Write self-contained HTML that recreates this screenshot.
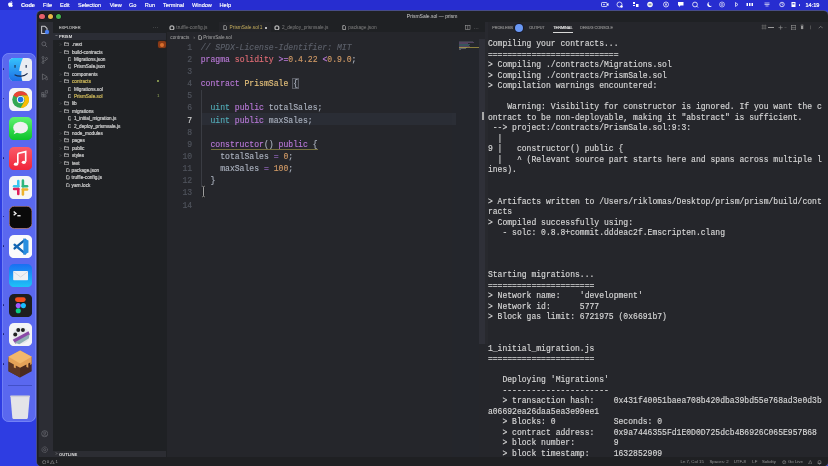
<!DOCTYPE html>
<html><head><meta charset="utf-8"><style>
*{margin:0;padding:0;box-sizing:border-box}
html,body{width:828px;height:466px;overflow:hidden;background:#2e3de2;font-family:"Liberation Sans",sans-serif}
div,span,svg{position:absolute}
.t{white-space:pre;line-height:10px;height:10px}
.m{font-family:"Liberation Mono",monospace}
#root{position:absolute;left:0;top:0;width:828px;height:466px;will-change:transform;overflow:hidden}
</style></head><body><div id="root">
<div style="left:0.00px;top:0.00px;width:828.00px;height:9.60px;background:#272dd0;"></div>
<svg style="left:8.2px;top:1.4px" width="5" height="6" viewBox="0 0 17 20"><path fill="#fff" d="M14.1 10.6c0-2.6 2.1-3.8 2.2-3.9-1.2-1.8-3.1-2-3.7-2-1.6-.2-3.1.9-3.9.9-.8 0-2-.9-3.3-.9C3.7 4.8 2.1 5.8 1.2 7.3c-1.8 3.1-.5 7.8 1.3 10.3.9 1.2 1.9 2.6 3.2 2.6 1.3-.1 1.8-.8 3.3-.8s2 .8 3.3.8c1.4 0 2.3-1.3 3.1-2.5 1-1.4 1.4-2.8 1.4-2.9-.1 0-2.7-1-2.7-4.2zM11.6 3c.7-.9 1.2-2 1-3.2-1 0-2.3.7-3 1.6-.7.8-1.2 2-1.1 3.1 1.2.1 2.3-.6 3.1-1.5z"/></svg>
<div class="t" style="left:21.00px;top:-0.10px;font-size:5.6px;color:#ffffff;font-weight:bold;-webkit-text-stroke:0.15px #ffffff;">Code</div>
<div class="t" style="left:43.00px;top:-0.10px;font-size:5.6px;color:#ffffff;font-weight:normal;-webkit-text-stroke:0.15px #ffffff;">File</div>
<div class="t" style="left:60.00px;top:-0.10px;font-size:5.6px;color:#ffffff;font-weight:normal;-webkit-text-stroke:0.15px #ffffff;">Edit</div>
<div class="t" style="left:78.00px;top:-0.10px;font-size:5.6px;color:#ffffff;font-weight:normal;-webkit-text-stroke:0.15px #ffffff;">Selection</div>
<div class="t" style="left:109.70px;top:-0.10px;font-size:5.6px;color:#ffffff;font-weight:normal;-webkit-text-stroke:0.15px #ffffff;">View</div>
<div class="t" style="left:129.00px;top:-0.10px;font-size:5.6px;color:#ffffff;font-weight:normal;-webkit-text-stroke:0.15px #ffffff;">Go</div>
<div class="t" style="left:144.80px;top:-0.10px;font-size:5.6px;color:#ffffff;font-weight:normal;-webkit-text-stroke:0.15px #ffffff;">Run</div>
<div class="t" style="left:163.00px;top:-0.10px;font-size:5.6px;color:#ffffff;font-weight:normal;-webkit-text-stroke:0.15px #ffffff;">Terminal</div>
<div class="t" style="left:192.00px;top:-0.10px;font-size:5.6px;color:#ffffff;font-weight:normal;-webkit-text-stroke:0.15px #ffffff;">Window</div>
<div class="t" style="left:219.50px;top:-0.10px;font-size:5.6px;color:#ffffff;font-weight:normal;-webkit-text-stroke:0.15px #ffffff;">Help</div>
<div class="t" style="left:805.40px;top:-0.10px;font-size:5.6px;color:#ffffff;font-weight:normal;-webkit-text-stroke:0.2px #ffffff;">14:19</div>
<svg style="left:601.20px;top:1.20px" width="8" height="7" viewBox="0 0 16 14"><rect x="1" y="3" width="11" height="8" rx="1.5" fill="none" stroke="#ffffff" stroke-width="1.5"/><path d="M12 6l3-2v6l-3-2z" fill="#ffffff"/><circle cx="6" cy="7" r="1.5" fill="#ffffff"/></svg>
<svg style="left:616.20px;top:1.20px" width="8" height="7" viewBox="0 0 16 14"><circle cx="7" cy="7" r="5" fill="none" stroke="#ffffff" stroke-width="1.5"/><circle cx="11" cy="11" r="2.5" fill="#ffffff"/></svg>
<svg style="left:631.50px;top:1.20px" width="8" height="7" viewBox="0 0 16 14"><rect x="2" y="2" width="4" height="4" fill="#ffffff"/><rect x="8" y="6" width="5" height="6" fill="#ffffff"/><rect x="2" y="8" width="4" height="2" fill="#ffffff"/></svg>
<svg style="left:646.20px;top:1.20px" width="8" height="7" viewBox="0 0 16 14"><circle cx="8" cy="7" r="5.5" fill="#ffffff"/><rect x="5" y="5" width="6" height="4" fill="#8b95a0"/></svg>
<svg style="left:661.90px;top:1.20px" width="8" height="7" viewBox="0 0 16 14"><circle cx="8" cy="7" r="5" fill="none" stroke="#ffffff" stroke-width="1.5"/><rect x="6" y="5" width="1.3" height="4" fill="#ffffff"/><rect x="8.7" y="5" width="1.3" height="4" fill="#ffffff"/></svg>
<svg style="left:677.00px;top:1.20px" width="8" height="7" viewBox="0 0 16 14"><path d="M2 2h11v7H7l-3 3V9H2z" fill="#ffffff"/></svg>
<svg style="left:690.70px;top:1.20px" width="8" height="7" viewBox="0 0 16 14"><circle cx="8" cy="7" r="4.8" fill="none" stroke="#ffffff" stroke-width="1.6"/><path d="M11 10l3 3" stroke="#ffffff" stroke-width="1.6"/></svg>
<svg style="left:705.20px;top:1.20px" width="8" height="7" viewBox="0 0 16 14"><path d="M9 2a5 5 0 1 0 5 7a4 4 0 0 1-5-7z" fill="#ffffff"/></svg>
<svg style="left:718.40px;top:1.20px" width="8" height="7" viewBox="0 0 16 14"><circle cx="8" cy="7" r="5" fill="none" stroke="#ffffff" stroke-width="1.2"/><circle cx="8" cy="7" r="2" fill="none" stroke="#ffffff" stroke-width="1.2"/></svg>
<svg style="left:733.00px;top:1.20px" width="6" height="7" viewBox="0 0 12 14"><path d="M5 3l5 4-5 4M5 3v8" fill="none" stroke="#ffffff" stroke-width="1.4"/></svg>
<svg style="left:746.40px;top:1.20px" width="8" height="7" viewBox="0 0 16 14"><rect x="1" y="4" width="3" height="6" fill="#ffffff"/><rect x="6" y="4" width="3" height="6" fill="#ffffff"/><rect x="11" y="4" width="3" height="6" fill="#ffffff"/></svg>
<svg style="left:762.70px;top:1.20px" width="8" height="7" viewBox="0 0 16 14"><path d="M3 4h10M3 7h10M5 10h6" stroke="#ffffff" stroke-width="1.3"/></svg>
<svg style="left:777.80px;top:1.20px" width="8" height="7" viewBox="0 0 16 14"><circle cx="8" cy="7" r="4.5" fill="none" stroke="#ffffff" stroke-width="1.5"/><path d="M8 4v3l2 1" stroke="#ffffff" stroke-width="1.2" fill="none"/></svg>
<svg style="left:789.70px;top:1.20px" width="8" height="7" viewBox="0 0 16 14"><rect x="3" y="2" width="8" height="10" fill="#ffffff"/><rect x="5" y="4" width="4" height="3" fill="#5560d0"/></svg>
<div style="left:798.6px;top:4.2px;width:1.4px;height:1.4px;border-radius:1px;background:#fff"></div>
<div style="left:2.00px;top:52.60px;width:33.80px;height:369.60px;background:#5a68ef;border-radius:7px;box-shadow:inset 0 0 0 0.7px rgba(150,165,255,0.55);"></div>
<svg style="left:8.6px;top:57.6px" width="23.2" height="23.2" viewBox="0 0 100 100"><defs><clipPath id="fc"><rect width="100" height="100" rx="20"/></clipPath><linearGradient id="fg" x1="0" y1="0" x2="0" y2="1"><stop offset="0" stop-color="#36c2fb"/><stop offset="1" stop-color="#1d6fe6"/></linearGradient></defs>
<g clip-path="url(#fc)"><rect width="100" height="100" fill="#e9edf2"/>
<path d="M0 0H60C52 18 46 38 44 56H54C52 72 54 88 58 100H0z" fill="url(#fg)"/>
<path d="M26 30v12M74 30v12" stroke="#1a2e50" stroke-width="5"/>
<path d="M24 72c18 10 42 8 56 -6" fill="none" stroke="#1a2e50" stroke-width="5"/></g></svg>
<svg style="left:8.6px;top:87.5px" width="23.2" height="23.2" viewBox="0 0 100 100"><rect width="100" height="100" rx="22" fill="#f4f4f6"/>
<circle cx="50" cy="50" r="36" fill="#34a853"/>
<path d="M50 14A36 36 0 0 1 81.2 32H50A18 18 0 0 0 34.4 41L18.8 32A36 36 0 0 1 50 14z" fill="#ea4335"/>
<path d="M81.2 32A36 36 0 0 1 50 86L65.6 59A18 18 0 0 0 50 32z" fill="#fbbc04"/>
<circle cx="50" cy="50" r="16" fill="#fff"/><circle cx="50" cy="50" r="12" fill="#1a73e8"/></svg>
<svg style="left:8.6px;top:117.2px" width="23.2" height="23.2" viewBox="0 0 100 100"><defs><linearGradient id="mg" x1="0" y1="0" x2="0" y2="1"><stop offset="0" stop-color="#5ff36f"/><stop offset="1" stop-color="#0bc22a"/></linearGradient></defs>
<rect width="100" height="100" rx="22" fill="url(#mg)"/>
<ellipse cx="50" cy="46" rx="32" ry="25" fill="#f0f0f0"/><path d="M26 60l-6 14 18-8z" fill="#f0f0f0"/></svg>
<svg style="left:8.6px;top:146.8px" width="23.2" height="23.2" viewBox="0 0 100 100"><defs><linearGradient id="mu" x1="0" y1="0" x2="0" y2="1"><stop offset="0" stop-color="#fa5a68"/><stop offset="1" stop-color="#f0243a"/></linearGradient></defs>
<rect width="100" height="100" rx="22" fill="url(#mu)"/>
<path d="M38 28L72 20V64" fill="none" stroke="#fff" stroke-width="7"/><path d="M38 28V72" stroke="#fff" stroke-width="7"/>
<ellipse cx="30" cy="74" rx="9" ry="7" fill="#fff"/><ellipse cx="64" cy="66" rx="9" ry="7" fill="#fff"/></svg>
<svg style="left:8.6px;top:175.9px" width="23.2" height="23.2" viewBox="0 0 100 100"><rect width="100" height="100" rx="22" fill="#f6f6f6"/>
<g stroke-linecap="round" stroke-width="11">
<path d="M40 22v22" stroke="#36c5f0"/><path d="M22 44h18" stroke="#36c5f0"/>
<path d="M60 20v24" stroke="#2eb67d"/><path d="M60 44h18" stroke="#2eb67d"/>
<path d="M60 58v22" stroke="#ecb22e"/><path d="M60 58h18" stroke="#ecb22e"/>
<path d="M40 56v22" stroke="#e01e5a"/><path d="M22 56h18" stroke="#e01e5a"/></g></svg>
<svg style="left:8.6px;top:206.0px" width="23.2" height="23.2" viewBox="0 0 100 100"><rect x="1" y="1" width="98" height="96" rx="22" fill="#0a0a0a" stroke="#c98a7a" stroke-width="3"/>
<path d="M20 24l10 8-10 8" fill="none" stroke="#eee" stroke-width="6"/><path d="M36 42h14" stroke="#eee" stroke-width="6"/></svg>
<svg style="left:8.6px;top:234.6px" width="23.2" height="23.2" viewBox="0 0 100 100"><rect width="100" height="100" rx="22" fill="#fbfbfb"/>
<path d="M70 20L24 58" stroke="#0f5fa8" stroke-width="10" stroke-linecap="round"/>
<path d="M24 42L70 80" stroke="#1569b8" stroke-width="10" stroke-linecap="round"/>
<path d="M62 14L84 24V76L62 86z" fill="#2a8fe0"/></svg>
<svg style="left:8.6px;top:264.2px" width="23.2" height="23.2" viewBox="0 0 100 100"><defs><linearGradient id="ml" x1="0" y1="0" x2="0" y2="1"><stop offset="0" stop-color="#1a6ff2"/><stop offset="1" stop-color="#1ec3f7"/></linearGradient></defs>
<rect width="100" height="100" rx="22" fill="url(#ml)"/>
<rect x="18" y="30" width="64" height="40" rx="3" fill="#eef0f4"/><path d="M18 32l32 24 32-24" fill="none" stroke="#c8ccd4" stroke-width="3"/></svg>
<svg style="left:8.6px;top:293.9px" width="23.2" height="23.2" viewBox="0 0 100 100"><rect width="100" height="100" rx="22" fill="#1e1e1e"/>
<path d="M36 14h26a10 10 0 0 1 0 20H36a10 10 0 0 1 0-20z" fill="#f24e1e"/>
<circle cx="40" cy="50" r="11" fill="#a259ff"/><circle cx="62" cy="50" r="11" fill="#1abcfe"/><circle cx="40" cy="72" r="11" fill="#0acf83"/></svg>
<svg style="left:8.6px;top:322.8px" width="23.2" height="23.2" viewBox="0 0 100 100"><rect width="100" height="100" rx="22" fill="#f4f4f6"/>
<circle cx="52" cy="54" r="36" fill="#e6e8ec"/>
<path d="M16 72L84 36L90 50L28 90z" fill="#8a4aa8"/><path d="M24 84L88 48L86 66L44 92z" fill="#8fb0b4"/>
<circle cx="40" cy="30" r="8.5" fill="#222"/><circle cx="60" cy="30" r="8.5" fill="#222"/><circle cx="27" cy="50" r="8.5" fill="#222"/></svg>
<svg style="left:8.3px;top:350.0px" width="24.2" height="28" viewBox="0 0 100 116">
<path d="M50 4L98 30V88L50 114L2 88V30z" fill="#4a2a1e"/>
<path d="M2 88L50 114L50 60L2 34z" fill="#5c3624"/>
<path d="M50 2L98 28V58L92 62V52L84 56V74L76 70V60L50 74L32 64V76L24 72V60L2 48V28z" fill="#e4a258"/>
<path d="M50 2L98 28L50 56L2 28z" fill="#f2b86c"/></svg>
<div style="left:8.40px;top:385.20px;width:23.20px;height:0.60px;background:#4250c8;"></div>
<svg style="left:9.8px;top:394.6px" width="20.2" height="24.6" viewBox="0 0 88 107">
<path d="M2 4H86L78 98Q77 105 70 105H18Q11 105 10 98z" fill="#e4e4e8"/><path d="M2 2H86V9H2z" fill="#d2d2d8"/></svg>
<div style="left:2.6px;top:68.2px;width:1.6px;height:1.6px;border-radius:1px;background:#1b2170"></div>
<div style="left:2.6px;top:97.60000000000001px;width:1.6px;height:1.6px;border-radius:1px;background:#1b2170"></div>
<div style="left:2.6px;top:157.0px;width:1.6px;height:1.6px;border-radius:1px;background:#1b2170"></div>
<div style="left:2.6px;top:215.7px;width:1.6px;height:1.6px;border-radius:1px;background:#1b2170"></div>
<div style="left:2.6px;top:245.2px;width:1.6px;height:1.6px;border-radius:1px;background:#1b2170"></div>
<div style="left:2.6px;top:304.2px;width:1.6px;height:1.6px;border-radius:1px;background:#1b2170"></div>
<div style="left:2.6px;top:333.2px;width:1.6px;height:1.6px;border-radius:1px;background:#1b2170"></div>
<div style="left:2.6px;top:363.0px;width:1.6px;height:1.6px;border-radius:1px;background:#1b2170"></div>
<div style="left:37.30px;top:10.60px;width:790.90px;height:455.80px;background:#1f2124;border-radius:4.5px;box-shadow:0 0 0 0.7px #50526a;"></div>
<div style="left:39.199999999999996px;top:13.5px;width:5.4px;height:5.4px;border-radius:50%;background:#e4606a;box-shadow:0 0 0 0.5px rgba(0,0,0,0.5)"></div>
<div style="left:47.599999999999994px;top:13.5px;width:5.4px;height:5.4px;border-radius:50%;background:#eab848;box-shadow:0 0 0 0.5px rgba(0,0,0,0.5)"></div>
<div style="left:55.9px;top:13.5px;width:5.4px;height:5.4px;border-radius:50%;background:#46b44e;box-shadow:0 0 0 0.5px rgba(0,0,0,0.5)"></div>
<div class="t" style="left:406.80px;top:11.00px;font-size:5.0px;color:#cfcfcf;font-weight:normal;">PrismSale.sol — prism</div>
<div style="left:37.30px;top:21.80px;width:15.30px;height:435.20px;background:#2c2d34;box-shadow:inset 1.6px 0 0 #1e1f25;"></div>
<div style="left:52.60px;top:21.80px;width:113.90px;height:435.20px;background:#1f2124;"></div>
<div style="left:166.50px;top:21.80px;width:318.30px;height:435.20px;background:#25262b;"></div>
<div style="left:484.80px;top:21.80px;width:343.40px;height:435.20px;background:#25262b;"></div>
<div style="left:37.30px;top:457.00px;width:790.90px;height:9.40px;background:#1f2023;border-radius:0 0 4.5px 4.5px;"></div>
<svg style="left:40.0px;top:24.6px" width="8.4" height="9.8" viewBox="0 0 16 19"><path d="M3 2.5H9.5L13.5 6.5V16.5H3z" fill="none" stroke="#c8c8cc" stroke-width="2" stroke-linejoin="round"/></svg>
<div style="left:45.3px;top:29.5px;width:4.2px;height:4.2px;border-radius:50%;background:#4a7ff2;box-shadow:0 0 1px #4a7ff2"></div>
<svg style="left:41.2px;top:41.2px" width="6.6" height="6.6" viewBox="0 0 14 14"><circle cx="6" cy="6" r="4.2" fill="none" stroke="#74757c" stroke-width="1.5"/><path d="M9 9l4 4" stroke="#74757c" stroke-width="1.5"/></svg>
<svg style="left:41.0px;top:55.8px" width="7" height="8" viewBox="0 0 14 16"><circle cx="4" cy="3" r="2" fill="none" stroke="#74757c" stroke-width="1.3"/><circle cx="4" cy="13" r="2" fill="none" stroke="#74757c" stroke-width="1.3"/><circle cx="11" cy="5" r="2" fill="none" stroke="#74757c" stroke-width="1.3"/><path d="M4 5v6M11 7c0 3-7 2-7 4" fill="none" stroke="#74757c" stroke-width="1.3"/></svg>
<svg style="left:40.6px;top:73.0px" width="7.6" height="7.6" viewBox="0 0 16 16"><path d="M3 2l10 6-10 6z" fill="none" stroke="#74757c" stroke-width="1.4"/><circle cx="12" cy="12" r="2.4" fill="#2a2b30" stroke="#74757c" stroke-width="1.2"/></svg>
<svg style="left:40.6px;top:90.2px" width="7.6" height="7.6" viewBox="0 0 16 16"><path d="M1.5 5.5h4.5v4.5h-4.5zM6 10h4.5v4.5H6zM1.5 10H6v4.5H1.5zM9 1.5h5v5H9z" fill="none" stroke="#74757c" stroke-width="1.3"/></svg>
<svg style="left:40.6px;top:430.3px" width="7.4" height="7.4" viewBox="0 0 16 16"><circle cx="8" cy="8" r="6.6" fill="none" stroke="#74757c" stroke-width="1.3"/><circle cx="8" cy="6.5" r="2.3" fill="none" stroke="#74757c" stroke-width="1.2"/><path d="M3.8 12.8c1.5-2.6 6.9-2.6 8.4 0" fill="none" stroke="#74757c" stroke-width="1.2"/></svg>
<svg style="left:40.6px;top:445.9px" width="7.4" height="7.4" viewBox="0 0 16 16"><circle cx="8" cy="8" r="6" fill="none" stroke="#74757c" stroke-width="1.6" stroke-dasharray="2.2 1"/><circle cx="8" cy="8" r="2.4" fill="none" stroke="#74757c" stroke-width="1.2"/></svg>
<div class="t" style="left:58.90px;top:23.20px;font-size:4.0px;color:#c0c0c0;font-weight:normal;-webkit-text-stroke:0.1px #c0c0c0;">EXPLORER</div>
<div class="t" style="left:152.40px;top:22.40px;font-size:6.0px;color:#8a8a8a;font-weight:normal;">···</div>
<div style="left:52.60px;top:32.60px;width:113.90px;height:7.20px;background:#2b2d35;"></div>
<svg style="left:54.6px;top:34.4px" width="3" height="3" viewBox="0 0 6 6"><path d="M1 2l2 2 2-2" fill="none" stroke="#aaa" stroke-width="1.2"/></svg>
<div class="t" style="left:58.90px;top:32.00px;font-size:4.2px;color:#dedede;font-weight:bold;">PRISM</div>
<svg style="left:59.2px;top:42.90px" width="3" height="3" viewBox="0 0 6 6"><path d="M2 1l2 2-2 2" fill="none" stroke="#6e6e6e" stroke-width="1.1"/></svg>
<svg style="left:64.2px;top:42.20px" width="5.2" height="4.2" viewBox="0 0 12 10"><path d="M1 1H4.5L5.8 2.4H11V9H1z" fill="none" stroke="#c0c0c0" stroke-width="1.7"/><path d="M1 3.6H11" stroke="#c0c0c0" stroke-width="1"/></svg>
<div class="t" style="left:72.00px;top:40.20px;font-size:4.7px;color:#cdcdcd;font-weight:normal;-webkit-text-stroke:0.2px #cdcdcd;">.next</div>
<svg style="left:59px;top:50.50px" width="3" height="3" viewBox="0 0 6 6"><path d="M1 2l2 2 2-2" fill="none" stroke="#6e6e6e" stroke-width="1.1"/></svg>
<svg style="left:64.2px;top:49.60px" width="5.2" height="4.2" viewBox="0 0 12 10"><path d="M1 1H4.5L5.8 2.4H11V9H1z" fill="none" stroke="#c0c0c0" stroke-width="1.7"/><path d="M1 3.6H11" stroke="#c0c0c0" stroke-width="1"/></svg>
<div class="t" style="left:72.00px;top:47.60px;font-size:4.7px;color:#cdcdcd;font-weight:normal;-webkit-text-stroke:0.2px #cdcdcd;">build-contracts</div>
<svg style="left:67.6px;top:56.90px" width="3.8" height="4.6" viewBox="0 0 8 10"><path d="M1.2 1.2H5L6.8 3V8.8H1.2z" fill="none" stroke="#c0c0c0" stroke-width="1.8" stroke-linejoin="round"/></svg>
<div class="t" style="left:73.90px;top:55.00px;font-size:4.7px;color:#cdcdcd;font-weight:normal;-webkit-text-stroke:0.2px #cdcdcd;">Migrations.json</div>
<svg style="left:67.6px;top:64.30px" width="3.8" height="4.6" viewBox="0 0 8 10"><path d="M1.2 1.2H5L6.8 3V8.8H1.2z" fill="none" stroke="#c0c0c0" stroke-width="1.8" stroke-linejoin="round"/></svg>
<div class="t" style="left:73.90px;top:62.40px;font-size:4.7px;color:#cdcdcd;font-weight:normal;-webkit-text-stroke:0.2px #cdcdcd;">PrismSale.json</div>
<svg style="left:59.2px;top:72.50px" width="3" height="3" viewBox="0 0 6 6"><path d="M2 1l2 2-2 2" fill="none" stroke="#6e6e6e" stroke-width="1.1"/></svg>
<svg style="left:64.2px;top:71.80px" width="5.2" height="4.2" viewBox="0 0 12 10"><path d="M1 1H4.5L5.8 2.4H11V9H1z" fill="none" stroke="#c0c0c0" stroke-width="1.7"/><path d="M1 3.6H11" stroke="#c0c0c0" stroke-width="1"/></svg>
<div class="t" style="left:72.00px;top:69.80px;font-size:4.7px;color:#cdcdcd;font-weight:normal;-webkit-text-stroke:0.2px #cdcdcd;">components</div>
<svg style="left:59px;top:80.10px" width="3" height="3" viewBox="0 0 6 6"><path d="M1 2l2 2 2-2" fill="none" stroke="#6e6e6e" stroke-width="1.1"/></svg>
<svg style="left:64.2px;top:79.20px" width="5.2" height="4.2" viewBox="0 0 12 10"><path d="M1 1H4.5L5.8 2.4H11V9H1z" fill="none" stroke="#c0c0c0" stroke-width="1.7"/><path d="M1 3.6H11" stroke="#c0c0c0" stroke-width="1"/></svg>
<div class="t" style="left:72.00px;top:77.20px;font-size:4.7px;color:#cdb85a;font-weight:normal;-webkit-text-stroke:0.2px #cdb85a;">contracts</div>
<svg style="left:67.6px;top:86.50px" width="3.8" height="4.6" viewBox="0 0 8 10"><path d="M1.2 1.2H5L6.8 3V8.8H1.2z" fill="none" stroke="#c0c0c0" stroke-width="1.8" stroke-linejoin="round"/></svg>
<div class="t" style="left:73.90px;top:84.60px;font-size:4.7px;color:#cdcdcd;font-weight:normal;-webkit-text-stroke:0.2px #cdcdcd;">Migrations.sol</div>
<svg style="left:67.6px;top:93.90px" width="3.8" height="4.6" viewBox="0 0 8 10"><path d="M1.2 1.2H5L6.8 3V8.8H1.2z" fill="none" stroke="#c0c0c0" stroke-width="1.8" stroke-linejoin="round"/></svg>
<div class="t" style="left:73.90px;top:92.00px;font-size:4.7px;color:#cdb85a;font-weight:normal;-webkit-text-stroke:0.2px #cdb85a;">PrismSale.sol</div>
<svg style="left:59.2px;top:102.10px" width="3" height="3" viewBox="0 0 6 6"><path d="M2 1l2 2-2 2" fill="none" stroke="#6e6e6e" stroke-width="1.1"/></svg>
<svg style="left:64.2px;top:101.40px" width="5.2" height="4.2" viewBox="0 0 12 10"><path d="M1 1H4.5L5.8 2.4H11V9H1z" fill="none" stroke="#c0c0c0" stroke-width="1.7"/><path d="M1 3.6H11" stroke="#c0c0c0" stroke-width="1"/></svg>
<div class="t" style="left:72.00px;top:99.40px;font-size:4.7px;color:#cdcdcd;font-weight:normal;-webkit-text-stroke:0.2px #cdcdcd;">lib</div>
<svg style="left:59px;top:109.70px" width="3" height="3" viewBox="0 0 6 6"><path d="M1 2l2 2 2-2" fill="none" stroke="#6e6e6e" stroke-width="1.1"/></svg>
<svg style="left:64.2px;top:108.80px" width="5.2" height="4.2" viewBox="0 0 12 10"><path d="M1 1H4.5L5.8 2.4H11V9H1z" fill="none" stroke="#c0c0c0" stroke-width="1.7"/><path d="M1 3.6H11" stroke="#c0c0c0" stroke-width="1"/></svg>
<div class="t" style="left:72.00px;top:106.80px;font-size:4.7px;color:#cdcdcd;font-weight:normal;-webkit-text-stroke:0.2px #cdcdcd;">migrations</div>
<svg style="left:67.6px;top:116.10px" width="3.8" height="4.6" viewBox="0 0 8 10"><path d="M1.2 1.2H5L6.8 3V8.8H1.2z" fill="none" stroke="#c0c0c0" stroke-width="1.8" stroke-linejoin="round"/></svg>
<div class="t" style="left:73.90px;top:114.20px;font-size:4.7px;color:#cdcdcd;font-weight:normal;-webkit-text-stroke:0.2px #cdcdcd;">1_initial_migration.js</div>
<svg style="left:67.6px;top:123.50px" width="3.8" height="4.6" viewBox="0 0 8 10"><path d="M1.2 1.2H5L6.8 3V8.8H1.2z" fill="none" stroke="#c0c0c0" stroke-width="1.8" stroke-linejoin="round"/></svg>
<div class="t" style="left:73.90px;top:121.60px;font-size:4.7px;color:#cdcdcd;font-weight:normal;-webkit-text-stroke:0.2px #cdcdcd;">2_deploy_prismsale.js</div>
<svg style="left:59.2px;top:131.70px" width="3" height="3" viewBox="0 0 6 6"><path d="M2 1l2 2-2 2" fill="none" stroke="#6e6e6e" stroke-width="1.1"/></svg>
<svg style="left:64.2px;top:131.00px" width="5.2" height="4.2" viewBox="0 0 12 10"><path d="M1 1H4.5L5.8 2.4H11V9H1z" fill="none" stroke="#c0c0c0" stroke-width="1.7"/><path d="M1 3.6H11" stroke="#c0c0c0" stroke-width="1"/></svg>
<div class="t" style="left:72.00px;top:129.00px;font-size:4.7px;color:#cdcdcd;font-weight:normal;-webkit-text-stroke:0.2px #cdcdcd;">node_modules</div>
<svg style="left:59.2px;top:139.10px" width="3" height="3" viewBox="0 0 6 6"><path d="M2 1l2 2-2 2" fill="none" stroke="#6e6e6e" stroke-width="1.1"/></svg>
<svg style="left:64.2px;top:138.40px" width="5.2" height="4.2" viewBox="0 0 12 10"><path d="M1 1H4.5L5.8 2.4H11V9H1z" fill="none" stroke="#c0c0c0" stroke-width="1.7"/><path d="M1 3.6H11" stroke="#c0c0c0" stroke-width="1"/></svg>
<div class="t" style="left:72.00px;top:136.40px;font-size:4.7px;color:#cdcdcd;font-weight:normal;-webkit-text-stroke:0.2px #cdcdcd;">pages</div>
<svg style="left:59.2px;top:146.50px" width="3" height="3" viewBox="0 0 6 6"><path d="M2 1l2 2-2 2" fill="none" stroke="#6e6e6e" stroke-width="1.1"/></svg>
<svg style="left:64.2px;top:145.80px" width="5.2" height="4.2" viewBox="0 0 12 10"><path d="M1 1H4.5L5.8 2.4H11V9H1z" fill="none" stroke="#c0c0c0" stroke-width="1.7"/><path d="M1 3.6H11" stroke="#c0c0c0" stroke-width="1"/></svg>
<div class="t" style="left:72.00px;top:143.80px;font-size:4.7px;color:#cdcdcd;font-weight:normal;-webkit-text-stroke:0.2px #cdcdcd;">public</div>
<svg style="left:59.2px;top:153.90px" width="3" height="3" viewBox="0 0 6 6"><path d="M2 1l2 2-2 2" fill="none" stroke="#6e6e6e" stroke-width="1.1"/></svg>
<svg style="left:64.2px;top:153.20px" width="5.2" height="4.2" viewBox="0 0 12 10"><path d="M1 1H4.5L5.8 2.4H11V9H1z" fill="none" stroke="#c0c0c0" stroke-width="1.7"/><path d="M1 3.6H11" stroke="#c0c0c0" stroke-width="1"/></svg>
<div class="t" style="left:72.00px;top:151.20px;font-size:4.7px;color:#cdcdcd;font-weight:normal;-webkit-text-stroke:0.2px #cdcdcd;">styles</div>
<svg style="left:59.2px;top:161.30px" width="3" height="3" viewBox="0 0 6 6"><path d="M2 1l2 2-2 2" fill="none" stroke="#6e6e6e" stroke-width="1.1"/></svg>
<svg style="left:64.2px;top:160.60px" width="5.2" height="4.2" viewBox="0 0 12 10"><path d="M1 1H4.5L5.8 2.4H11V9H1z" fill="none" stroke="#c0c0c0" stroke-width="1.7"/><path d="M1 3.6H11" stroke="#c0c0c0" stroke-width="1"/></svg>
<div class="t" style="left:72.00px;top:158.60px;font-size:4.7px;color:#cdcdcd;font-weight:normal;-webkit-text-stroke:0.2px #cdcdcd;">test</div>
<svg style="left:65.8px;top:167.90px" width="3.8" height="4.6" viewBox="0 0 8 10"><path d="M1.2 1.2H5L6.8 3V8.8H1.2z" fill="none" stroke="#c0c0c0" stroke-width="1.8" stroke-linejoin="round"/></svg>
<div class="t" style="left:71.60px;top:166.00px;font-size:4.7px;color:#cdcdcd;font-weight:normal;-webkit-text-stroke:0.2px #cdcdcd;">package.json</div>
<svg style="left:65.8px;top:175.30px" width="3.8" height="4.6" viewBox="0 0 8 10"><path d="M1.2 1.2H5L6.8 3V8.8H1.2z" fill="none" stroke="#c0c0c0" stroke-width="1.8" stroke-linejoin="round"/></svg>
<div class="t" style="left:71.60px;top:173.40px;font-size:4.7px;color:#cdcdcd;font-weight:normal;-webkit-text-stroke:0.2px #cdcdcd;">truffle-config.js</div>
<svg style="left:65.8px;top:182.70px" width="3.8" height="4.6" viewBox="0 0 8 10"><path d="M1.2 1.2H5L6.8 3V8.8H1.2z" fill="none" stroke="#c0c0c0" stroke-width="1.8" stroke-linejoin="round"/></svg>
<div class="t" style="left:71.60px;top:180.80px;font-size:4.7px;color:#cdcdcd;font-weight:normal;-webkit-text-stroke:0.2px #cdcdcd;">yarn.lock</div>
<div style="left:158.2px;top:41.2px;width:7.4px;height:7px;border-radius:2px;background:#8a3a16;box-shadow:0 0 1.2px #5a2a10"></div>
<div style="left:159.8px;top:43.0px;width:4.2px;height:4.2px;border-radius:50%;background:#d8702e"></div>
<div style="left:157.0px;top:80.2px;width:1.8px;height:1.8px;border-radius:50%;background:#9bb05a"></div>
<div class="t" style="left:157.00px;top:91.40px;font-size:4.4px;color:#9bb05a;font-weight:normal;">1</div>
<div style="left:52.60px;top:450.80px;width:113.90px;height:6.40px;background:#2c2d33;"></div>
<svg style="left:55.4px;top:452.4px" width="3" height="3" viewBox="0 0 6 6"><path d="M2 1l2 2-2 2" fill="none" stroke="#aaa" stroke-width="1.1"/></svg>
<div class="t" style="left:58.90px;top:449.60px;font-size:4.2px;color:#dedede;font-weight:bold;">OUTLINE</div>
<div style="left:166.50px;top:21.80px;width:318.30px;height:10.40px;background:#1f2124;"></div>
<div style="left:219.30px;top:21.80px;width:52.00px;height:10.40px;background:#232428;"></div>
<svg style="left:169.00px;top:24.50px" width="5.8" height="5.8" viewBox="0 0 10 10"><circle cx="5" cy="5" r="3.4" fill="none" stroke="#b0b0b0" stroke-width="2.2"/></svg>
<div class="t" style="left:176.30px;top:23.00px;font-size:4.8px;color:#808080;font-weight:normal;">truffle-config.js</div>
<svg style="left:222.80px;top:25.20px" width="4.4" height="5.2" viewBox="0 0 8 10"><path d="M1.2 1.2H5L6.8 3V8.8H1.2z" fill="none" stroke="#a0a0a0" stroke-width="1.6" stroke-linejoin="round"/></svg>
<div class="t" style="left:229.60px;top:23.00px;font-size:4.8px;color:#c4ad5c;font-weight:normal;">PrismSale.sol</div>
<div class="t" style="left:259.80px;top:23.00px;font-size:4.8px;color:#c4ad5c;font-weight:normal;">1</div>
<div style="left:264.6px;top:26.7px;width:2.6px;height:2.6px;border-radius:50%;background:#e8e8e8"></div>
<svg style="left:274.00px;top:24.50px" width="5.8" height="5.8" viewBox="0 0 10 10"><circle cx="5" cy="5" r="3.4" fill="none" stroke="#b0b0b0" stroke-width="2.2"/></svg>
<div class="t" style="left:282.00px;top:23.00px;font-size:4.7px;color:#808080;font-weight:normal;">2_deploy_prismsale.js</div>
<svg style="left:342.00px;top:25.20px" width="4.4" height="5.2" viewBox="0 0 8 10"><path d="M1.2 1.2H5L6.8 3V8.8H1.2z" fill="none" stroke="#b0b0b0" stroke-width="1.6" stroke-linejoin="round"/></svg>
<div class="t" style="left:348.30px;top:23.00px;font-size:4.8px;color:#808080;font-weight:normal;">package.json</div>
<svg style="left:465.3px;top:25.4px" width="5.4" height="5.2" viewBox="0 0 11 10"><rect x=".7" y=".7" width="9.6" height="8.6" fill="none" stroke="#9a9a9a" stroke-width="1.2"/><path d="M5.5 1v8" stroke="#9a9a9a" stroke-width="1.1"/></svg>
<div class="t" style="left:473.40px;top:23.00px;font-size:5.6px;color:#8a8a8a;font-weight:normal;">···</div>
<div class="t" style="left:170.30px;top:32.60px;font-size:4.7px;color:#a9a9a9;font-weight:normal;">contracts</div>
<div class="t" style="left:193.20px;top:31.60px;font-size:5.4px;color:#8a8a8a;font-weight:normal;">›</div>
<svg style="left:197.60px;top:34.60px" width="4.2" height="5.0" viewBox="0 0 8 10"><path d="M1.2 1.2H5L6.8 3V8.8H1.2z" fill="none" stroke="#a9a9a9" stroke-width="1.6" stroke-linejoin="round"/></svg>
<div class="t" style="left:203.20px;top:32.60px;font-size:4.7px;color:#a9a9a9;font-weight:normal;">PrismSale.sol</div>
<div style="left:201.20px;top:113.20px;width:254.40px;height:12.30px;background:#2a2d35;"></div>
<div style="left:200.60px;top:90.19px;width:0.70px;height:97.12px;background:#3a3c43;"></div>
<div style="left:292.47px;top:77.9px;width:6.2px;height:11px;border:0.7px solid #5a5c64;background:#2c2e34"></div>
<div class="t m" style="right:635.80px;top:42.70px;font-size:8.12px;color:#50545d;-webkit-text-stroke-width:0.15px;transform:scaleY(1.08);transform-origin:0 5px">1</div>
<div class="t m" style="left:200.7px;top:42.70px;font-size:8.12px;-webkit-text-stroke-width:0.14px;transform:scaleY(1.07);transform-origin:0 5px"><span style="position:static;color:#5c606a;font-style:italic">// SPDX-License-Identifier: MIT</span></div>
<div class="t m" style="right:635.80px;top:54.84px;font-size:8.12px;color:#50545d;-webkit-text-stroke-width:0.15px;transform:scaleY(1.08);transform-origin:0 5px">2</div>
<div class="t m" style="left:200.7px;top:54.84px;font-size:8.12px;-webkit-text-stroke-width:0.14px;transform:scaleY(1.07);transform-origin:0 5px"><span style="position:static;color:#b878d6">pragma</span><span style="position:static;color:#abb2bf"> </span><span style="position:static;color:#e06c75">solidity</span><span style="position:static;color:#abb2bf"> </span><span style="position:static;color:#b878d6">&gt;=</span><span style="position:static;color:#d19a66">0.4.22</span><span style="position:static;color:#abb2bf"> </span><span style="position:static;color:#b878d6">&lt;</span><span style="position:static;color:#d19a66">0.9.0</span><span style="position:static;color:#abb2bf">;</span></div>
<div class="t m" style="right:635.80px;top:66.98px;font-size:8.12px;color:#50545d;-webkit-text-stroke-width:0.15px;transform:scaleY(1.08);transform-origin:0 5px">3</div>
<div class="t m" style="right:635.80px;top:79.12px;font-size:8.12px;color:#50545d;-webkit-text-stroke-width:0.15px;transform:scaleY(1.08);transform-origin:0 5px">4</div>
<div class="t m" style="left:200.7px;top:79.12px;font-size:8.12px;-webkit-text-stroke-width:0.14px;transform:scaleY(1.07);transform-origin:0 5px"><span style="position:static;color:#b878d6">contract</span><span style="position:static;color:#abb2bf"> </span><span style="position:static;color:#e5c07b">PrismSale</span><span style="position:static;color:#abb2bf"> </span><span style="position:static;color:#abb2bf">{</span></div>
<div class="t m" style="right:635.80px;top:91.26px;font-size:8.12px;color:#50545d;-webkit-text-stroke-width:0.15px;transform:scaleY(1.08);transform-origin:0 5px">5</div>
<div class="t m" style="right:635.80px;top:103.40px;font-size:8.12px;color:#50545d;-webkit-text-stroke-width:0.15px;transform:scaleY(1.08);transform-origin:0 5px">6</div>
<div class="t m" style="left:200.7px;top:103.40px;font-size:8.12px;-webkit-text-stroke-width:0.14px;transform:scaleY(1.07);transform-origin:0 5px"><span style="position:static;color:#abb2bf">  </span><span style="position:static;color:#52abb6">uint</span><span style="position:static;color:#abb2bf"> </span><span style="position:static;color:#b878d6">public</span><span style="position:static;color:#abb2bf"> totalSales;</span></div>
<div class="t m" style="right:635.80px;top:115.54px;font-size:8.12px;color:#d0d0d0;-webkit-text-stroke-width:0.15px;transform:scaleY(1.08);transform-origin:0 5px">7</div>
<div class="t m" style="left:200.7px;top:115.54px;font-size:8.12px;-webkit-text-stroke-width:0.14px;transform:scaleY(1.07);transform-origin:0 5px"><span style="position:static;color:#abb2bf">  </span><span style="position:static;color:#52abb6">uint</span><span style="position:static;color:#abb2bf"> </span><span style="position:static;color:#b878d6">public</span><span style="position:static;color:#abb2bf"> maxSales;</span></div>
<div class="t m" style="right:635.80px;top:127.68px;font-size:8.12px;color:#50545d;-webkit-text-stroke-width:0.15px;transform:scaleY(1.08);transform-origin:0 5px">8</div>
<div class="t m" style="right:635.80px;top:139.82px;font-size:8.12px;color:#50545d;-webkit-text-stroke-width:0.15px;transform:scaleY(1.08);transform-origin:0 5px">9</div>
<div class="t m" style="left:200.7px;top:139.82px;font-size:8.12px;-webkit-text-stroke-width:0.14px;transform:scaleY(1.07);transform-origin:0 5px"><span style="position:static;color:#abb2bf">  </span><span style="position:static;color:#b878d6">constructor</span><span style="position:static;color:#abb2bf">() </span><span style="position:static;color:#b878d6">public</span><span style="position:static;color:#abb2bf"> {</span></div>
<div class="t m" style="right:635.80px;top:151.96px;font-size:8.12px;color:#50545d;-webkit-text-stroke-width:0.15px;transform:scaleY(1.08);transform-origin:0 5px">10</div>
<div class="t m" style="left:200.7px;top:151.96px;font-size:8.12px;-webkit-text-stroke-width:0.14px;transform:scaleY(1.07);transform-origin:0 5px"><span style="position:static;color:#abb2bf">    totalSales </span><span style="position:static;color:#8a62b0">=</span><span style="position:static;color:#abb2bf"> </span><span style="position:static;color:#d19a66">0</span><span style="position:static;color:#abb2bf">;</span></div>
<div class="t m" style="right:635.80px;top:164.10px;font-size:8.12px;color:#50545d;-webkit-text-stroke-width:0.15px;transform:scaleY(1.08);transform-origin:0 5px">11</div>
<div class="t m" style="left:200.7px;top:164.10px;font-size:8.12px;-webkit-text-stroke-width:0.14px;transform:scaleY(1.07);transform-origin:0 5px"><span style="position:static;color:#abb2bf">    maxSales </span><span style="position:static;color:#8a62b0">=</span><span style="position:static;color:#abb2bf"> </span><span style="position:static;color:#d19a66">100</span><span style="position:static;color:#abb2bf">;</span></div>
<div class="t m" style="right:635.80px;top:176.24px;font-size:8.12px;color:#50545d;-webkit-text-stroke-width:0.15px;transform:scaleY(1.08);transform-origin:0 5px">12</div>
<div class="t m" style="left:200.7px;top:176.24px;font-size:8.12px;-webkit-text-stroke-width:0.14px;transform:scaleY(1.07);transform-origin:0 5px"><span style="position:static;color:#abb2bf">  }</span></div>
<div class="t m" style="right:635.80px;top:188.38px;font-size:8.12px;color:#50545d;-webkit-text-stroke-width:0.15px;transform:scaleY(1.08);transform-origin:0 5px">13</div>
<div class="t m" style="right:635.80px;top:200.52px;font-size:8.12px;color:#50545d;-webkit-text-stroke-width:0.15px;transform:scaleY(1.08);transform-origin:0 5px">14</div>
<div style="left:210.60px;top:149.40px;width:107.90px;height:0.70px;background:#7d7840;opacity:0.9;"></div>
<svg style="left:200.6px;top:185px" width="5" height="13" viewBox="0 0 5 13"><path d="M1 1q1.5 0 1.5 1.5v8q0 1.5 -1.5 1.5M4 1q-1.5 0 -1.5 1.5v8q0 1.5 1.5 1.5" fill="none" stroke="#111" stroke-width="1.4"/><path d="M1 1q1.5 0 1.5 1.5v8q0 1.5 -1.5 1.5M4 1q-1.5 0 -1.5 1.5v8q0 1.5 1.5 1.5" fill="none" stroke="#bbb" stroke-width="0.6"/></svg>
<div style="left:452.00px;top:40.00px;width:27.00px;height:417.00px;background:#24262c;"></div>
<div style="left:452.00px;top:113.20px;width:4.20px;height:12.30px;background:#2b2e36;"></div>
<div style="left:459.20px;top:40.80px;width:13.64px;height:0.50px;background:#5b606a;opacity:0.45;"></div>
<div style="left:459.20px;top:41.50px;width:14.88px;height:0.50px;background:#8e66a0;opacity:0.45;"></div>
<div style="left:459.20px;top:42.90px;width:9.30px;height:0.50px;background:#8e66a0;opacity:0.45;"></div>
<div style="left:459.20px;top:44.30px;width:10.54px;height:0.50px;background:#4f8d96;opacity:0.45;"></div>
<div style="left:459.20px;top:45.00px;width:9.92px;height:0.50px;background:#4f8d96;opacity:0.45;"></div>
<div style="left:459.20px;top:46.40px;width:10.54px;height:0.50px;background:#8e66a0;opacity:0.45;"></div>
<div style="left:459.20px;top:47.10px;width:7.44px;height:0.50px;background:#9aa0aa;opacity:0.45;"></div>
<div style="left:459.20px;top:47.80px;width:6.82px;height:0.50px;background:#9aa0aa;opacity:0.45;"></div>
<div style="left:459.20px;top:48.50px;width:1.86px;height:0.50px;background:#9aa0aa;opacity:0.45;"></div>
<div style="left:458.60px;top:46.90px;width:21.40px;height:0.60px;background:#b9a545;opacity:0.7;"></div>
<div style="left:479.00px;top:39.00px;width:6.20px;height:304.80px;background:#2f3038;"></div>
<div style="left:482.20px;top:111.80px;width:1.60px;height:7.80px;background:#a8a8a8;"></div>
<div style="left:485.20px;top:39.00px;width:2.40px;height:304.80px;background:#28292e;"></div>
<div class="t" style="left:492.20px;top:22.90px;font-size:3.75px;color:#8e8e8e;font-weight:normal;-webkit-text-stroke:0.15px #8e8e8e;">PROBLEMS</div>
<div style="left:515.0px;top:23.599999999999998px;width:8.2px;height:8.2px;border-radius:50%;background:#6a98f4;box-shadow:0 0 0 0.8px #15172a"></div>
<div class="t" style="left:529.30px;top:22.90px;font-size:3.8px;color:#8e8e8e;font-weight:normal;-webkit-text-stroke:0.15px #8e8e8e;">OUTPUT</div>
<div class="t" style="left:553.30px;top:22.90px;font-size:3.8px;color:#e6e6e6;font-weight:normal;-webkit-text-stroke:0.15px #e6e6e6;">TERMINAL</div>
<div style="left:553.20px;top:32.40px;width:19.80px;height:0.60px;background:#d8d8d8;"></div>
<div class="t" style="left:579.90px;top:22.90px;font-size:3.8px;color:#8e8e8e;font-weight:normal;-webkit-text-stroke:0.15px #8e8e8e;">DEBUG CONSOLE</div>
<svg style="left:760.8px;top:24.2px" width="6" height="6" viewBox="0 0 12 12"><path d="M1 3h10M1 6h10M1 9h10M3 1v10M6 1v10M9 1v10" stroke="#6e6e6e" stroke-width="0.9"/></svg>
<div style="left:768.40px;top:26.60px;width:5.80px;height:1.30px;background:#9a9a9a;"></div>
<svg style="left:777.6px;top:24.599999999999998px" width="5.2" height="5.2" viewBox="0 0 10 10"><path d="M5 1v8M1 5h8" stroke="#8e8e8e" stroke-width="1.3"/></svg>
<svg style="left:784.4px;top:25.8px" width="3" height="3" viewBox="0 0 6 6"><path d="M1 2l2 2 2-2" fill="none" stroke="#6a6a6a" stroke-width="1"/></svg>
<svg style="left:790.8px;top:24.5px" width="5.4" height="5.4" viewBox="0 0 10 10"><rect x="1" y="1" width="8" height="8" fill="none" stroke="#8e8e8e" stroke-width="1.2"/><path d="M1 5h8" stroke="#8e8e8e" stroke-width="1.2"/></svg>
<svg style="left:800.2px;top:24.4px" width="4.2" height="5.6" viewBox="0 0 8 10"><path d="M1 2h6M3 1h2" stroke="#8e8e8e" stroke-width="1"/><path d="M1.8 3h4.4v6.4H1.8z" fill="#9a9a9a"/></svg>
<svg style="left:809.2px;top:24.8px" width="3" height="4.8" viewBox="0 0 6 10"><path d="M3 1v8" stroke="#5e5e5e" stroke-width="1.6"/></svg>
<svg style="left:817.6px;top:25.2px" width="5.4" height="4" viewBox="0 0 10 8"><path d="M1 6.5l4-4 4 4" fill="none" stroke="#8e8e8e" stroke-width="1.4"/></svg>
<div style="left:484.80px;top:21.80px;width:2.80px;height:17.20px;background:#28292f;"></div>
<div class="t m" style="left:487.9px;top:39.30px;font-size:8.07px;color:#d6d6d6;-webkit-text-stroke:0.15px #d6d6d6;transform:scaleY(1.08);transform-origin:0 5px">Compiling your contracts...</div>
<div class="t m" style="left:487.9px;top:49.80px;font-size:8.07px;color:#d6d6d6;-webkit-text-stroke:0.15px #d6d6d6;transform:scaleY(1.08);transform-origin:0 5px">===========================</div>
<div class="t m" style="left:487.9px;top:60.31px;font-size:8.07px;color:#d6d6d6;-webkit-text-stroke:0.15px #d6d6d6;transform:scaleY(1.08);transform-origin:0 5px">&gt; Compiling ./contracts/Migrations.sol</div>
<div class="t m" style="left:487.9px;top:70.81px;font-size:8.07px;color:#d6d6d6;-webkit-text-stroke:0.15px #d6d6d6;transform:scaleY(1.08);transform-origin:0 5px">&gt; Compiling ./contracts/PrismSale.sol</div>
<div class="t m" style="left:487.9px;top:81.32px;font-size:8.07px;color:#d6d6d6;-webkit-text-stroke:0.15px #d6d6d6;transform:scaleY(1.08);transform-origin:0 5px">&gt; Compilation warnings encountered:</div>
<div class="t m" style="left:487.9px;top:102.33px;font-size:8.07px;color:#d6d6d6;-webkit-text-stroke:0.15px #d6d6d6;transform:scaleY(1.08);transform-origin:0 5px">    Warning: Visibility for constructor is ignored. If you want the c</div>
<div class="t m" style="left:487.9px;top:112.84px;font-size:8.07px;color:#d6d6d6;-webkit-text-stroke:0.15px #d6d6d6;transform:scaleY(1.08);transform-origin:0 5px">ontract to be non-deployable, making it "abstract" is sufficient.</div>
<div class="t m" style="left:487.9px;top:123.34px;font-size:8.07px;color:#d6d6d6;-webkit-text-stroke:0.15px #d6d6d6;transform:scaleY(1.08);transform-origin:0 5px"> --&gt; project:/contracts/PrismSale.sol:9:3:</div>
<div class="t m" style="left:487.9px;top:133.84px;font-size:8.07px;color:#d6d6d6;-webkit-text-stroke:0.15px #d6d6d6;transform:scaleY(1.08);transform-origin:0 5px">  |</div>
<div class="t m" style="left:487.9px;top:144.35px;font-size:8.07px;color:#d6d6d6;-webkit-text-stroke:0.15px #d6d6d6;transform:scaleY(1.08);transform-origin:0 5px">9 |   constructor() public {</div>
<div class="t m" style="left:487.9px;top:154.86px;font-size:8.07px;color:#d6d6d6;-webkit-text-stroke:0.15px #d6d6d6;transform:scaleY(1.08);transform-origin:0 5px">  |   ^ (Relevant source part starts here and spans across multiple l</div>
<div class="t m" style="left:487.9px;top:165.36px;font-size:8.07px;color:#d6d6d6;-webkit-text-stroke:0.15px #d6d6d6;transform:scaleY(1.08);transform-origin:0 5px">ines).</div>
<div class="t m" style="left:487.9px;top:196.88px;font-size:8.07px;color:#d6d6d6;-webkit-text-stroke:0.15px #d6d6d6;transform:scaleY(1.08);transform-origin:0 5px">&gt; Artifacts written to /Users/riklomas/Desktop/prism/prism/build/cont</div>
<div class="t m" style="left:487.9px;top:207.38px;font-size:8.07px;color:#d6d6d6;-webkit-text-stroke:0.15px #d6d6d6;transform:scaleY(1.08);transform-origin:0 5px">racts</div>
<div class="t m" style="left:487.9px;top:217.88px;font-size:8.07px;color:#d6d6d6;-webkit-text-stroke:0.15px #d6d6d6;transform:scaleY(1.08);transform-origin:0 5px">&gt; Compiled successfully using:</div>
<div class="t m" style="left:487.9px;top:228.39px;font-size:8.07px;color:#d6d6d6;-webkit-text-stroke:0.15px #d6d6d6;transform:scaleY(1.08);transform-origin:0 5px">   - solc: 0.8.8+commit.dddeac2f.Emscripten.clang</div>
<div class="t m" style="left:487.9px;top:270.41px;font-size:8.07px;color:#d6d6d6;-webkit-text-stroke:0.15px #d6d6d6;transform:scaleY(1.08);transform-origin:0 5px">Starting migrations...</div>
<div class="t m" style="left:487.9px;top:280.92px;font-size:8.07px;color:#d6d6d6;-webkit-text-stroke:0.15px #d6d6d6;transform:scaleY(1.08);transform-origin:0 5px">======================</div>
<div class="t m" style="left:487.9px;top:291.42px;font-size:8.07px;color:#d6d6d6;-webkit-text-stroke:0.15px #d6d6d6;transform:scaleY(1.08);transform-origin:0 5px">&gt; Network name:    'development'</div>
<div class="t m" style="left:487.9px;top:301.93px;font-size:8.07px;color:#d6d6d6;-webkit-text-stroke:0.15px #d6d6d6;transform:scaleY(1.08);transform-origin:0 5px">&gt; Network id:      5777</div>
<div class="t m" style="left:487.9px;top:312.43px;font-size:8.07px;color:#d6d6d6;-webkit-text-stroke:0.15px #d6d6d6;transform:scaleY(1.08);transform-origin:0 5px">&gt; Block gas limit: 6721975 (0x6691b7)</div>
<div class="t m" style="left:487.9px;top:343.95px;font-size:8.07px;color:#d6d6d6;-webkit-text-stroke:0.15px #d6d6d6;transform:scaleY(1.08);transform-origin:0 5px">1_initial_migration.js</div>
<div class="t m" style="left:487.9px;top:354.45px;font-size:8.07px;color:#d6d6d6;-webkit-text-stroke:0.15px #d6d6d6;transform:scaleY(1.08);transform-origin:0 5px">======================</div>
<div class="t m" style="left:487.9px;top:375.46px;font-size:8.07px;color:#d6d6d6;-webkit-text-stroke:0.15px #d6d6d6;transform:scaleY(1.08);transform-origin:0 5px">   Deploying 'Migrations'</div>
<div class="t m" style="left:487.9px;top:385.97px;font-size:8.07px;color:#d6d6d6;-webkit-text-stroke:0.15px #d6d6d6;transform:scaleY(1.08);transform-origin:0 5px">   ----------------------</div>
<div class="t m" style="left:487.9px;top:396.47px;font-size:8.07px;color:#d6d6d6;-webkit-text-stroke:0.15px #d6d6d6;transform:scaleY(1.08);transform-origin:0 5px">   &gt; transaction hash:    0x431f40051baea708b420dba39bd55e768ad3e0d3b</div>
<div class="t m" style="left:487.9px;top:406.98px;font-size:8.07px;color:#d6d6d6;-webkit-text-stroke:0.15px #d6d6d6;transform:scaleY(1.08);transform-origin:0 5px">a06692ea26daa5ea3e99ee1</div>
<div class="t m" style="left:487.9px;top:417.48px;font-size:8.07px;color:#d6d6d6;-webkit-text-stroke:0.15px #d6d6d6;transform:scaleY(1.08);transform-origin:0 5px">   &gt; Blocks: 0            Seconds: 0</div>
<div class="t m" style="left:487.9px;top:427.99px;font-size:8.07px;color:#d6d6d6;-webkit-text-stroke:0.15px #d6d6d6;transform:scaleY(1.08);transform-origin:0 5px">   &gt; contract address:    0x9a7446355Fd1E0D0D725dcb4B6926C065E957B68</div>
<div class="t m" style="left:487.9px;top:438.49px;font-size:8.07px;color:#d6d6d6;-webkit-text-stroke:0.15px #d6d6d6;transform:scaleY(1.08);transform-origin:0 5px">   &gt; block number:        9</div>
<div class="t m" style="left:487.9px;top:449.00px;font-size:8.07px;color:#d6d6d6;-webkit-text-stroke:0.15px #d6d6d6;transform:scaleY(1.08);transform-origin:0 5px">   &gt; block timestamp:     1632852909</div>
<svg style="left:41.6px;top:460.1px" width="4.4" height="4.4" viewBox="0 0 10 10"><circle cx="5" cy="5" r="3.8" fill="none" stroke="#9a9a9a" stroke-width="1.3"/></svg>
<div class="t" style="left:46.80px;top:457.30px;font-size:4.4px;color:#9a9a9a;font-weight:normal;">0</div>
<svg style="left:50.0px;top:460.0px" width="4.6" height="4.4" viewBox="0 0 10 10"><path d="M5 1L9.4 9H.6z" fill="none" stroke="#9a9a9a" stroke-width="1.2"/></svg>
<div class="t" style="left:55.40px;top:457.30px;font-size:4.4px;color:#9a9a9a;font-weight:normal;">1</div>
<div class="t" style="left:680.60px;top:457.30px;font-size:4.3px;color:#9a9a9a;font-weight:normal;">Ln 7, Col 15</div>
<div class="t" style="left:709.50px;top:457.30px;font-size:4.3px;color:#9a9a9a;font-weight:normal;">Spaces: 2</div>
<div class="t" style="left:733.70px;top:457.30px;font-size:4.3px;color:#9a9a9a;font-weight:normal;">UTF-8</div>
<div class="t" style="left:752.30px;top:457.30px;font-size:4.3px;color:#9a9a9a;font-weight:normal;">LF</div>
<div class="t" style="left:762.00px;top:457.30px;font-size:4.3px;color:#9a9a9a;font-weight:normal;">Solidity</div>
<div class="t" style="left:788.00px;top:457.30px;font-size:4.3px;color:#9a9a9a;font-weight:normal;">Go Live</div>
<svg style="left:782.2px;top:460.1px" width="4.4" height="4.4" viewBox="0 0 10 10"><circle cx="5" cy="5" r="3.6" fill="none" stroke="#9a9a9a" stroke-width="1.2"/><path d="M5 3v3" stroke="#9a9a9a" stroke-width="1.2"/></svg>
<svg style="left:807.6px;top:460.1px" width="4.6" height="4.4" viewBox="0 0 10 10"><path d="M1 9l4-8 4 8z" fill="none" stroke="#9a9a9a" stroke-width="1.1"/></svg>
<svg style="left:817.0px;top:459.90000000000003px" width="5" height="4.8" viewBox="0 0 10 10"><path d="M2 7V4a3 3 0 0 1 6 0v3H1.5h7M4 9h2" fill="none" stroke="#9a9a9a" stroke-width="1.1"/></svg>
</div></body></html>
